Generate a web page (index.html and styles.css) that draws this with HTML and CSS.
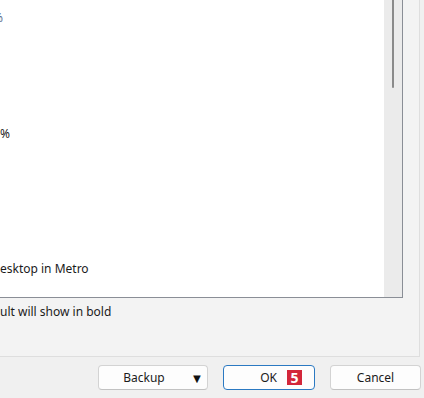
FILE: index.html
```html
<!DOCTYPE html>
<html lang="en">
<head>
    <meta charset="UTF-8">
    <meta name="viewport" content="width=device-width, initial-scale=1.0">
    <title>Options</title>
    <link rel="stylesheet" href="styles.css">
</head>
<body>
    <div class="dialog">
        <div class="panel">
            <div class="list">
                <div class="rows">
                    <div class="row"><span class="clip">%</span></div>
                    <div class="row"></div>
                    <div class="row"></div>
                    <div class="row"></div>
                    <div class="row"></div>
                    <div class="row"></div>
                    <div class="row">%</div>
                    <div class="row"></div>
                    <div class="row"></div>
                    <div class="row"></div>
                    <div class="row"></div>
                    <div class="row"></div>
                    <div class="row"></div>
                    <div class="row">esktop in Metro</div>
                </div>
                <div class="scrollbar">
                    <div class="thumb"></div>
                </div>
            </div>
            <p class="note">ult will show in bold</p>
        </div>

        <div class="footer">
            <button class="btn backup">
                <span class="label">Backup</span>
                <span class="arrow">&#9660;</span>
            </button>
            <button class="btn ok">
                <span class="label">OK</span>
                <span class="badge">5</span>
            </button>
            <button class="btn cancel">Cancel</button>
        </div>
    </div>
</body>
</html>
```

FILE: styles.css
```css
body {
    margin: 0;
    padding: 0;
    font-family: "Noto Sans", "Open Sans", sans-serif;
    font-size: 12px;
    color: #1b1b1b;
    background-color: #f0f0f0;
}
.dialog {
    width: 424px;
    height: 398px;
    overflow: hidden;
    display: flex;
    flex-direction: column;
    background-color: #f0f0f0;
}
.panel {
    width: 419px;
    height: 356px;
    flex: none;
    background-color: #f3f3f3;
    border-right: 1px solid #dedede;
    border-bottom: 1px solid #dedede;
}
.list {
    width: 402px;
    height: 297px;
    display: flex;
    background-color: white;
    border-right: 1px solid #8a8e96;
    border-bottom: 1px solid #8a8e96;
}
.rows {
    flex: 1;
    padding-top: 8.4px;
    overflow: hidden;
}
.row {
    height: 19.3px;
    line-height: 19.3px;
    white-space: nowrap;
}
.clip {
    display: inline-block;
    margin-left: -7px;
    color: #5a6a8a;
}
.scrollbar {
    width: 18px;
    background-color: #ebebeb;
    display: flex;
    justify-content: center;
}
.thumb {
    width: 2px;
    height: 88px;
    background-color: #8a8a8a;
    border-radius: 0 0 1px 1px;
}
.note {
    margin: 5px 0 0 0;
    line-height: 18px;
}
.footer {
    display: flex;
    justify-content: flex-end;
    gap: 15px;
    padding: 8px 3px 0 0;
}
.btn {
    height: 25px;
    box-sizing: border-box;
    background-color: #fdfdfd;
    border: 1px solid #d3d3d3;
    border-bottom-color: #c2c2c2;
    border-radius: 4px;
    font-family: inherit;
    font-size: 12px;
    color: #1b1b1b;
    padding: 0;
    display: flex;
    align-items: center;
}
.backup {
    width: 110px;
}
.backup .label {
    flex: 1;
    text-align: center;
    padding-left: 2px;
}
.arrow {
    font-size: 13px;
    width: 20px;
    color: #111;
}
.ok {
    width: 92px;
    border: 1px solid #2b79c2;
    justify-content: flex-end;
    padding-right: 12px;
}
.ok .label {
    margin-right: 10px;
}
.badge {
    width: 15px;
    height: 15px;
    background-color: #d3263a;
    color: white;
    font-weight: bold;
    font-size: 14px;
    line-height: 15px;
    text-align: center;
}
.cancel {
    width: 91px;
    justify-content: center;
}
```
